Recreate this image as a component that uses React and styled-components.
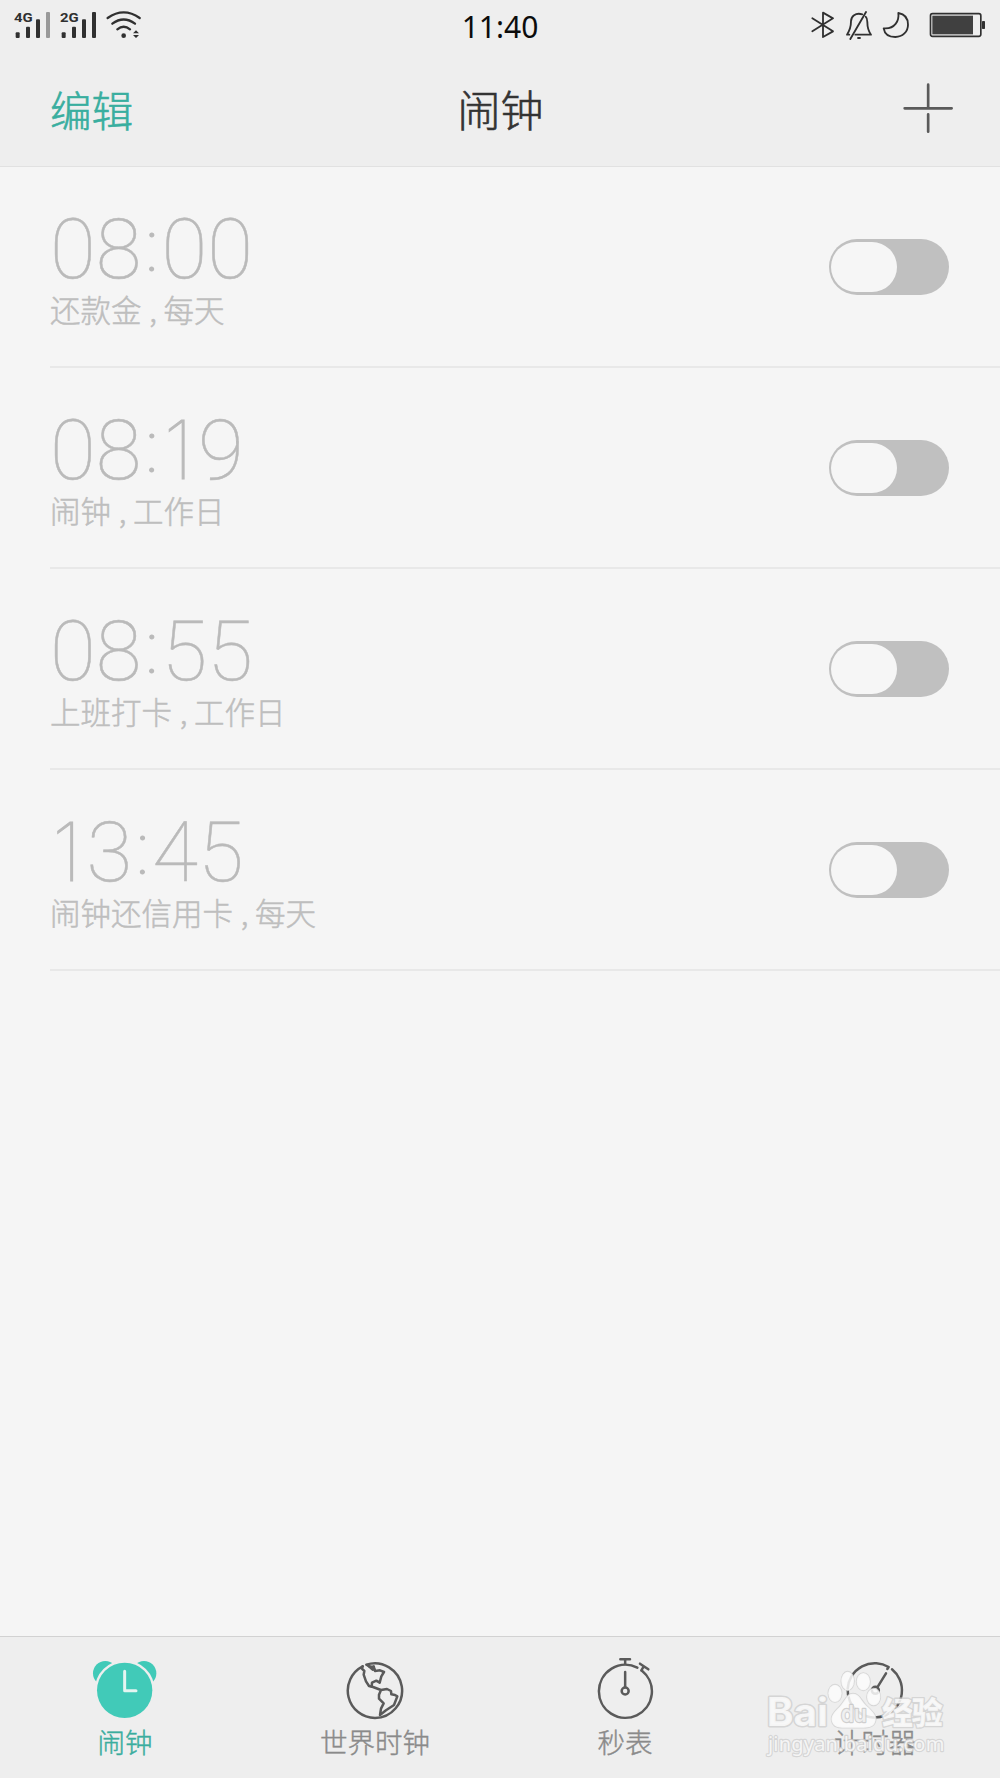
import React, { useState } from "react";
import styled, { createGlobalStyle } from "styled-components";

const GlobalStyle = createGlobalStyle`
  * { box-sizing: border-box; }
  body {
    margin: 0;
    background: #f5f5f5;
    font-family: "Noto Sans CJK SC", "Noto Sans", sans-serif;
  }
`;

const Screen = styled.div`
  width: 1000px;
  height: 1778px;
  display: flex;
  flex-direction: column;
  background: #f5f5f5;
`;

const StatusBar = styled.div`
  height: 50px;
  display: grid;
  grid-template-columns: 1fr auto 1fr;
  align-items: center;
  background: #eeeeee;
  padding: 0 14px;
`;

const StatusGroup = styled.div`
  display: flex;
  align-items: center;
  justify-content: ${(p) => (p.$end ? "flex-end" : "flex-start")};
  gap: ${(p) => p.$gap}px;
`;

const BatterySlot = styled.div`
  display: flex;
  padding-left: 9px;
`;

const StatusTime = styled.div`
  font-family: "Noto Sans", sans-serif;
  font-size: 30px;
  line-height: 46px;
  color: #0c0c0c;
  padding-top: 3px;
`;

const Header = styled.header`
  height: 117px;
  display: grid;
  grid-template-columns: 1fr auto 1fr;
  align-items: center;
  background: #eeeeee;
  border-bottom: 1px solid #e1e1e1;
  padding: 1px 47px 0 50px;
`;

const EditButton = styled.button`
  justify-self: start;
  border: 0;
  padding: 0;
  background: none;
  font: 300 41.5px/60px "Noto Sans CJK SC", sans-serif;
  -webkit-text-stroke: 0.6px currentColor;
  color: #39ae9f;
`;

const Title = styled.h1`
  margin: 0;
  padding: 0 2px 2px 0;
  font: 300 43px/60px "Noto Sans CJK SC", sans-serif;
  -webkit-text-stroke: 0.6px currentColor;
  color: #333333;
`;

const AddButton = styled.button`
  justify-self: end;
  display: flex;
  border: 0;
  padding: 0;
  background: none;
`;

const AlarmList = styled.main`
  flex: 1;
  padding-left: 50px;
`;

const AlarmRow = styled.section`
  height: 201px;
  display: flex;
  align-items: center;
  justify-content: space-between;
  padding-right: 51px;
  border-bottom: 2px solid #e8e8e8;
`;

const AlarmText = styled.div`
  display: flex;
  flex-direction: column;
`;

const AlarmTime = styled.div`
  font: 100 83.5px/84px Roboto, sans-serif;
  -webkit-text-stroke: 0.5px currentColor;
  color: #bababa;
  white-space: nowrap;
  padding-top: 5px;
  height: 84px;
`;

const Colon = styled.span`
  display: inline-block;
  width: 20px;
  text-indent: 4px;
  font-size: 72px;
  line-height: 60px;
  -webkit-text-stroke: 1.2px currentColor;
  transform: translateY(-7px);
`;

const One = styled.span`
  display: inline-block;
  width: 36.5px;
  text-indent: 2px;
  font-family: Inter, sans-serif;
  font-size: 81px;
  line-height: 60px;
  -webkit-text-stroke: 1.1px currentColor;
`;

const AlarmLabel = styled.div`
  font: 300 30.5px/44px "Noto Sans CJK SC", sans-serif;
  -webkit-text-stroke: 0.5px currentColor;
  color: #bebebe;
  white-space: pre;
`;

const Comma = styled.span`
  padding: 0 0 0 1px;
`;

const Switch = styled.button`
  width: 120px;
  height: 56px;
  display: flex;
  justify-content: ${(p) => (p.$on ? "flex-end" : "flex-start")};
  align-items: center;
  border: 0;
  padding: 0 2px;
  border-radius: 28px;
  background: ${(p) => (p.$on ? "#41cab8" : "#c0c0c0")};
`;

const Knob = styled.span`
  width: 66px;
  height: 50px;
  border-radius: 25px;
  background: #f6f6f6;
`;

const TabBar = styled.nav`
  position: relative;
  height: 142px;
  display: grid;
  grid-template-columns: repeat(4, 1fr);
  background: #eeeeee;
  border-top: 1px solid #d2d2d2;
`;

const Tab = styled.a`
  display: flex;
  flex-direction: column;
  align-items: center;
  padding-top: 18px;
`;

const TabLabel = styled.span`
  font: 300 27.5px/40px "Noto Sans CJK SC", sans-serif;
  -webkit-text-stroke: 0.4px currentColor;
  color: ${(p) => (p.$active ? "#3aad9e" : "#8a8a8a")};
  margin-top: 1px;
`;

const Watermark = styled.svg`
  position: absolute;
  right: 0;
  bottom: 0;
  pointer-events: none;
`;

/* Every drawing uses a 3x coordinate grid: [x, y, width, height]. */
const Drawing = ({ box, children, ...rest }) => (
  <svg
    width={box[2] / 3}
    height={box[3] / 3}
    viewBox={box.join(" ")}
    fill="none"
    strokeLinecap="round"
    strokeLinejoin="round"
    {...rest}
  >
    {children}
  </svg>
);

const Signal = ({ name, weak }) => (
  <Drawing box={[42, 30, 111, 90]} fill="#303030">
    <text x="42" y="66" fontFamily="Roboto" fontWeight="700" fontSize="38" textLength="56" lengthAdjust="spacingAndGlyphs">
      {name}
    </text>
    <rect x="47" y="97" width="12" height="17" rx="3" />
    <rect x="78" y="80" width="12" height="34" rx="3" />
    <rect x="108" y="58" width="12" height="56" rx="3" />
    <rect x="138" y="36" width="12" height="78" rx="3" fill={weak ? "#999999" : "#303030"} />
  </Drawing>
);

const Wifi = () => (
  <Drawing box={[318, 30, 105, 90]} stroke="#303030" strokeWidth="7">
    <path d="M323 54Q371 20 419 54" />
    <path d="M337 71Q371 46 405 71" />
    <path d="M352 88Q371 72 390 88" />
    <circle cx="371" cy="107" r="7" fill="#303030" stroke="none" />
    <path d="M399 100L408 91L417 100ZM399 105L408 114L417 105Z" fill="#303030" stroke="none" />
  </Drawing>
);

const Bluetooth = () => (
  <Drawing box={[34, 30, 72, 90]} stroke="#303030" strokeWidth="5.5">
    <path d="M38 55L100 94L70 111V38L100 55L38 94" />
  </Drawing>
);

const BellOff = () => (
  <Drawing box={[136, 30, 84, 90]} stroke="#303030" strokeWidth="5.5">
    <path d="M188 43C167 37 154 49 154 64C154 84 150 92 142 104H149M167 104H214C206 93 203 86 203 66C203 58 201 53 198 50" />
    <path d="M199 36L152 117" />
    <path d="M173 114H183" strokeWidth="6" strokeLinecap="butt" />
  </Drawing>
);

const Moon = () => (
  <Drawing box={[248, 30, 84, 90]} stroke="#303030" strokeWidth="5.5">
    <path d="M297 39C300 62 287 88 253 85C256 103 271 111 288 111C310 111 326 95 326 74C326 55 315 42 297 39Z" />
  </Drawing>
);

const Battery = () => (
  <Drawing box={[387, 30, 171, 90]}>
    <rect x="391.5" y="41" width="151" height="68" rx="6" stroke="#303030" strokeWidth="5" />
    <rect x="397" y="47" width="122" height="56" fill="#404040" />
    <rect x="546" y="63" width="9" height="24" rx="2" fill="#303030" />
  </Drawing>
);

const Plus = () => (
  <Drawing box={[308, 40, 151, 151]} stroke="#5a5a5a" strokeWidth="8">
    <path d="M313 116H454M383.5 45V112M383.5 134V186" />
  </Drawing>
);

const AlarmIcon = () => (
  <Drawing box={[96, 105, 196, 195]} fill="#41cab8">
    <circle cx="136" cy="160" r="37" />
    <circle cx="252" cy="160" r="37" />
    <circle cx="194" cy="211" r="90" fill="#eeeeee" />
    <circle cx="194" cy="211" r="83" />
    <path d="M194 154V212H228" fill="none" stroke="#e4f5f1" strokeWidth="9" />
  </Drawing>
);

const GlobeIcon = () => (
  <Drawing box={[136, 105, 180, 195]} stroke="#5a5a5a" strokeWidth="7.5">
    <path d="M189 139A82 82 0 0 0 226 294A82 82 0 1 0 200 134L207 138L217 141L222 139L226 153L241 151L253 156L245 169L240 188L230 182L217 188L216 200" />
    <path d="M189 139L186 145L194 153L192 164L199 184L208 198L220 201L244 210L238 224V236L252 250L244 266L241 285L259 271L283 255L293 229L286 225L275 223L274 213L262 207L244 210" />
    <path d="M207 138L219 149L224 148" />
  </Drawing>
);

const StopwatchIcon = () => (
  <Drawing box={[107, 105, 176, 195]} stroke="#5a5a5a" strokeWidth="7.5">
    <path d="M245 152A79.5 79.5 0 1 1 231 143" />
    <path d="M180 118H209M194.500 118V132M194.500 156V201M239 131L264 148M250 140L243 151" />
    <circle cx="194.500" cy="213" r="10.500" />
  </Drawing>
);

const TimerIcon = () => (
  <Drawing box={[286, 105, 178, 195]} stroke="#5a5a5a" strokeWidth="7.5">
    <path d="M427 148A81.500 81.500 0 1 1 417 141L413 147" />
    <path d="M409 160L383 202" />
    <circle cx="377" cy="211" r="10.500" />
  </Drawing>
);

const BaiduMark = () => (
  <Watermark width="250" height="142" viewBox="0 48 750 426">
    <g fill="#fbfbfb" fillOpacity="0.85" stroke="#cfcfcf" strokeOpacity="0.8" strokeWidth="5" strokeLinejoin="round" paintOrder="stroke">
      <text x="50" y="319" fontFamily="Inter, sans-serif" fontWeight="700" fontSize="117" textLength="184" lengthAdjust="spacingAndGlyphs" strokeWidth="9">
        Bai
      </text>
      <ellipse cx="255" cy="220" rx="20" ry="26" />
      <ellipse cx="293" cy="183" rx="19" ry="28" />
      <ellipse cx="340" cy="185" rx="20" ry="26" />
      <ellipse cx="371" cy="231" rx="20" ry="25" />
      <path d="M309 221C329 221 333 243 350 258C369 275 384 290 374 309C366 326 344 323 310 323C279 323 257 327 248 310C238 290 252 277 269 260C285 243 290 221 309 221Z" />
      <text x="273" y="307" fontFamily="Inter, sans-serif" fontWeight="600" fontSize="70" textLength="77" lengthAdjust="spacingAndGlyphs" fill="#f4f4f4" stroke="#c4c4c4" strokeWidth="7">
        du
      </text>
      <text x="396" y="311" fontFamily="Noto Sans CJK SC" fontWeight="900" fontSize="93" textLength="182" strokeWidth="8">
        经验
      </text>
      <text x="54" y="392" fontFamily="Noto Sans, sans-serif" fontSize="60" textLength="529" strokeWidth="7">
        jingyan.baidu.com
      </text>
    </g>
  </Watermark>
);

const ClockText = ({ value }) => (
  <AlarmTime>
    {[...value].map((ch, i) => {
      if (ch === ":") return <Colon key={i}>{ch}</Colon>;
      if (ch === "1") return <One key={i}>{ch}</One>;
      return ch;
    })}
  </AlarmTime>
);

const alarms = [
  { time: "08:00", name: "还款金", repeat: "每天" },
  { time: "08:19", name: "闹钟", repeat: "工作日" },
  { time: "08:55", name: "上班打卡", repeat: "工作日" },
  { time: "13:45", name: "闹钟还信用卡", repeat: "每天" },
];

const tabs = [
  { label: "闹钟", icon: AlarmIcon, active: true },
  { label: "世界时钟", icon: GlobeIcon },
  { label: "秒表", icon: StopwatchIcon },
  { label: "计时器", icon: TimerIcon },
];

const Alarm = ({ time, name, repeat }) => {
  const [on, setOn] = useState(false);
  return (
    <AlarmRow>
      <AlarmText>
        <ClockText value={time} />
        <AlarmLabel>
          {name}
          <Comma>{" , "}</Comma>
          {repeat}
        </AlarmLabel>
      </AlarmText>
      <Switch $on={on} onClick={() => setOn(!on)} aria-pressed={on}>
        <Knob />
      </Switch>
    </AlarmRow>
  );
};

export default function App() {
  return (
    <Screen>
      <GlobalStyle />
      <StatusBar>
        <StatusGroup $gap={9}>
          <Signal name="4G" weak />
          <Signal name="2G" />
          <Wifi />
        </StatusGroup>
        <StatusTime>11:40</StatusTime>
        <StatusGroup $end $gap={9.7}>
          <Bluetooth />
          <BellOff />
          <Moon />
          <BatterySlot>
            <Battery />
          </BatterySlot>
        </StatusGroup>
      </StatusBar>
      <Header>
        <EditButton>编辑</EditButton>
        <Title>闹钟</Title>
        <AddButton>
          <Plus />
        </AddButton>
      </Header>
      <AlarmList>
        {alarms.map((a) => (
          <Alarm key={a.time} {...a} />
        ))}
      </AlarmList>
      <TabBar>
        {tabs.map(({ label, icon: Icon, active }) => (
          <Tab key={label}>
            <Icon />
            <TabLabel $active={active}>{label}</TabLabel>
          </Tab>
        ))}
        <BaiduMark />
      </TabBar>
    </Screen>
  );
}
